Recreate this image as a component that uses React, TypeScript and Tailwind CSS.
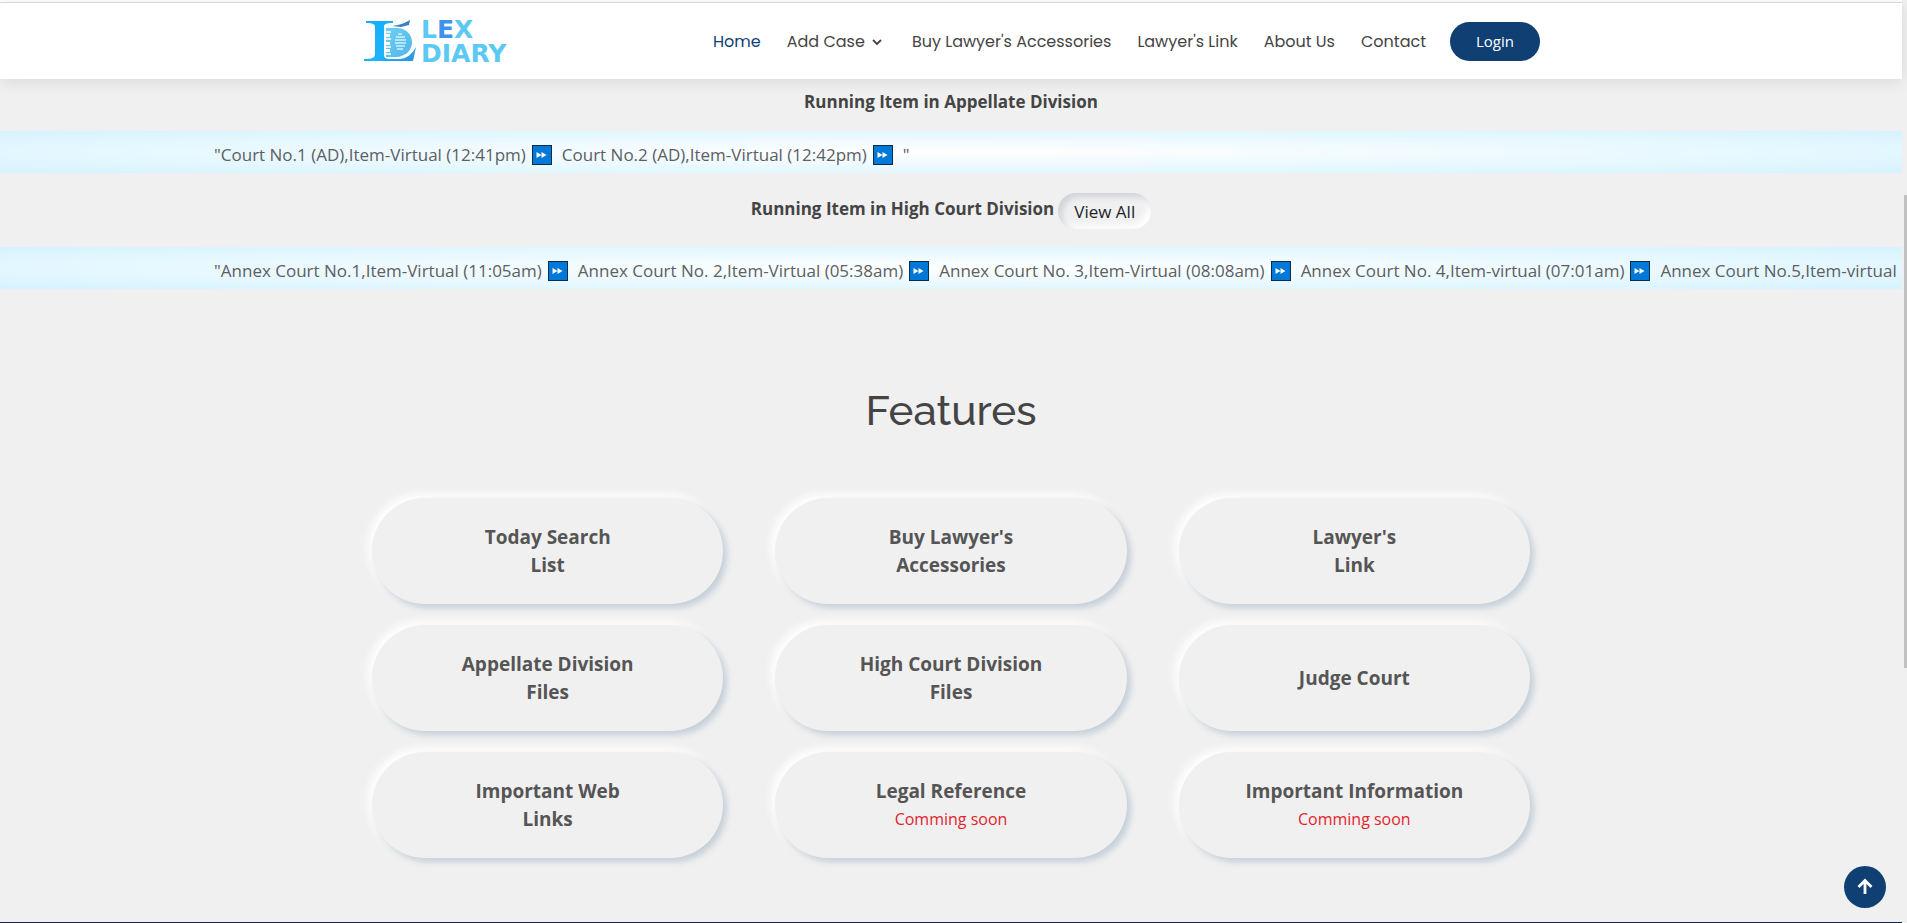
import React from "react";

const navLinks = [
  { label: "Home", active: true },
  { label: "Add Case", menu: true },
  { label: "Buy Lawyer's Accessories" },
  { label: "Lawyer's Link" },
  { label: "About Us" },
  { label: "Contact" },
];

const appellateItems = [
  "Court No.1 (AD),Item-Virtual (12:41pm)",
  "Court No.2 (AD),Item-Virtual (12:42pm)",
];

const highCourtItems = [
  "Annex Court No.1,Item-Virtual (11:05am)",
  "Annex Court No. 2,Item-Virtual (05:38am)",
  "Annex Court No. 3,Item-Virtual (08:08am)",
  "Annex Court No. 4,Item-virtual (07:01am)",
  "Annex Court No.5,Item-virtual",
];

const features: { lines: string[]; soon?: boolean }[] = [
  { lines: ["Today Search", "List"] },
  { lines: ["Buy Lawyer's", "Accessories"] },
  { lines: ["Lawyer's", "Link"] },
  { lines: ["Appellate Division", "Files"] },
  { lines: ["High Court Division", "Files"] },
  { lines: ["Judge Court"] },
  { lines: ["Important Web", "Links"] },
  { lines: ["Legal Reference"], soon: true },
  { lines: ["Important Information"], soon: true },
];

function Logo() {
  return (
    <a href="#home" aria-label="Lex Diary" className="flex shrink-0 items-center gap-1">
      <svg width="53" height="42" viewBox="0 0 53 42" aria-hidden="true">
        <defs>
          <linearGradient id="stem" x1="0" y1="0" x2="1" y2="1">
            <stop offset="0" stopColor="#12aefb" />
            <stop offset="0.6" stopColor="#1cb4fa" />
            <stop offset="1" stopColor="#2f8fe8" />
          </linearGradient>
          <linearGradient id="bowl" x1="0" y1="0" x2="1" y2="1">
            <stop offset="0" stopColor="#6ed0f4" />
            <stop offset="1" stopColor="#4fb4ea" />
          </linearGradient>
        </defs>
        <path
          d="M2 1H29V3C22 3 20 4 20 7V35C20 38 22 39 27 39H36C44 38 48 34 52 27L49 41H0V39C8 39 11 38 11 34V7C11 4 9 3 2 3Z"
          fill="url(#stem)"
        />
        <path d="M28 6C36 5 41 3 46 0L45 5L37 7Z" fill="#3d7fc9" />
        <path
          d="M22 8H34C43 9 48 15 48 22C48 30 42 36 33 37H22V32H26V29H22V25H26V22H22V17H26V14H22Z"
          fill="url(#bowl)"
        />
        <path d="M22 12H27M22 19H27M22 27H27M22 34H27" stroke="#ffffff" strokeWidth="1.4" />
        <path
          d="M34 14H38M32 17H41M31 20H42M31 23H42M32 26H41M33 29H39"
          stroke="#d3f1fc"
          strokeWidth="1.4"
        />
      </svg>
      <span className="flex flex-col pt-0.5 font-['DejaVu_Sans',sans-serif] text-[25px] leading-6 font-bold text-[#5cc9f3]">
        <span>
          L<span className="text-[#3f93ee]">E</span>X
        </span>
        <span>DIARY</span>
      </span>
    </a>
  );
}

function FastForward() {
  return (
    <svg className="inline-block shrink-0" width="20" height="20" viewBox="0 0 20 20" aria-hidden="true">
      <rect x="0.5" y="0.5" width="19" height="19" fill="#0078d7" stroke="#0c2c4c" />
      <path d="M4.5 7L9.5 10L4.5 13ZM9.5 7L14.5 10L9.5 13Z" fill="#ffffff" />
    </svg>
  );
}

function Ticker({ items, open }: { items: string[]; open?: boolean }) {
  return (
    <div className="h-[42px] overflow-hidden bg-[radial-gradient(ellipse_at_center,#ffffff_0%,#d6f3ff_100%)] pr-1 pl-[214px] text-[17px]">
      <div className="flex h-full items-center overflow-hidden pt-[5px] whitespace-nowrap">
        <span>"</span>
        {items.map((item, i) => (
          <span key={item} className="flex items-center">
            <span>{item}</span>
            {!(open && i === items.length - 1) && (
              <span className="mr-[10px] ml-[6px] flex">
                <FastForward />
              </span>
            )}
          </span>
        ))}
        {!open && <span>"</span>}
      </div>
    </div>
  );
}

export default function App() {
  return (
    <div className="flex min-h-screen bg-[#f0f0f0] font-['Open_Sans',sans-serif] text-base leading-6 text-[#5c5f63]">
      <div className="flex min-w-0 flex-1 flex-col">
        <div className="h-0.5 bg-white" />
        <header className="relative border-t border-[#d8d8d8] bg-white shadow-[0_2px_15px_rgba(0,0,0,0.1)]">
          <div className="mx-auto flex h-[76px] max-w-[1178px] items-center justify-between pl-0.5">
            <Logo />
            <nav className="flex items-center gap-[26px] font-['Poppins','Inter',sans-serif] text-base whitespace-nowrap text-[#444444]">
              {navLinks.map((link) => (
                <a
                  key={link.label}
                  href="#"
                  className={link.active ? "pt-px text-[#0f3f73]" : "flex items-center gap-[6px] pt-px"}
                >
                  {link.label}
                  {link.menu && (
                    <svg className="mr-[3px]" width="12" height="12" viewBox="0 0 12 12" fill="none" aria-hidden="true">
                      <path d="M2 4L6 8L10 4" stroke="#444444" strokeWidth="1.8" />
                    </svg>
                  )}
                </a>
              ))}
              <button
                type="button"
                className="-ml-[2px] h-[39px] w-[90px] rounded-full bg-[#0f3f73] font-['Open_Sans',sans-serif] text-[15px] font-medium text-white"
              >
                Login
              </button>
            </nav>
          </div>
        </header>

        <main className="flex-1">
          <h2 className="pt-[11px] pb-[17px] text-center text-[17px] font-bold text-[#444444]">
            Running Item in Appellate Division
          </h2>
          <Ticker items={appellateItems} />
          <div className="flex h-[74px] items-center justify-center gap-1 pt-[2px] text-[17px]">
            <h2 className="pb-1 font-bold text-[#444444]">Running Item in High Court Division</h2>
            <button
              type="button"
              className="h-9 w-[93px] rounded-full pt-0.5 text-[#212529] shadow-[inset_4px_4px_6px_#cfd3da,inset_-4px_-4px_6px_#ffffff]"
            >
              View All
            </button>
          </div>
          <Ticker items={highCourtItems} open />

          <section className="px-4 pt-[92px] pb-[62px]">
            <h1 className="text-center font-['Raleway','Lato',sans-serif] text-[42px] leading-[60px] font-medium text-[#444444]">
              Features
            </h1>
            <div className="mx-auto mt-[57px] grid max-w-[1158px] grid-cols-3 gap-x-[52px] gap-y-[21px]">
              {features.map((f) => (
                <a
                  key={f.lines[0]}
                  href="#"
                  className="flex h-[106px] flex-col items-center justify-center rounded-full bg-[#f0f0f0] text-center shadow-[4px_4px_6px_#c5cfd9,-4px_-4px_8px_#ffffff]"
                >
                  {f.lines.map((line) => (
                    <span key={line} className="text-[19px] leading-7 font-bold text-[#555555]">
                      {line}
                    </span>
                  ))}
                  {f.soon && <span className="leading-7 text-[#e3242b]">Comming soon</span>}
                </a>
              ))}
            </div>
          </section>
        </main>
        <footer className="h-px bg-[#14263f]" />
      </div>

      <div className="w-[5px] shrink-0 bg-[#f0f0f0] pt-[195px]">
        <div className="ml-auto h-[473px] w-[3px] bg-[#c1c1c1]" />
      </div>

      <button
        type="button"
        aria-label="Back to top"
        className="fixed right-[21px] bottom-[15px] flex size-[42px] items-center justify-center rounded-full bg-[#0f3f73]"
      >
        <svg width="18" height="18" viewBox="0 0 18 18" fill="none" aria-hidden="true">
          <path d="M9 16V3M2.5 9L9 2.5L15.5 9" stroke="#ffffff" strokeWidth="2.8" />
        </svg>
      </button>
    </div>
  );
}
